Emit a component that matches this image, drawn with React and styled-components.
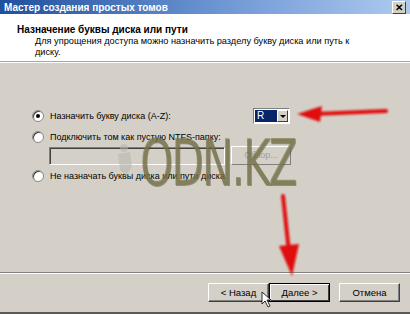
import React from "react";
import styled, { createGlobalStyle } from "styled-components";

const Global = createGlobalStyle`
  html, body { margin: 0; padding: 0; background: #d4d0c8; }
  body { font-family: "Liberation Sans", Arial, sans-serif; }
`;

const Window = styled.div`
  position: relative;
  width: 410px;
  height: 314px;
  display: flex;
  flex-direction: column;
  background: #d4d0c8;
  overflow: hidden;
  border-bottom: 2px solid #5a5955;
  box-sizing: border-box;
`;

const TitleBar = styled.div`
  height: 14px;
  flex: none;
  display: flex;
  align-items: center;
  justify-content: space-between;
  padding: 0 4px 0 4px;
  background: linear-gradient(90deg, #1f4f9e 0%, #6f98d4 55%, #aecbef 100%);
  color: #fff;
  font-size: 10px;
  font-weight: bold;
`;

const CloseBox = styled.div`
  width: 12px;
  height: 11px;
  background: #d4d0c8;
  border: 1px solid;
  border-color: #fff #404040 #404040 #fff;
  color: #000;
  font-size: 10px;
  line-height: 11px;
  text-align: center;
  font-weight: bold;
  margin-top: 1px;
`;

const Header = styled.div`
  height: 48px;
  flex: none;
  background: #fff;
  padding: 9px 0 0 17px;
  box-sizing: border-box;
  border-bottom: 1px solid #a9a6a0;
`;

const HeaderTitle = styled.div`
  font-size: 10px;
  font-weight: bold;
  color: #000;
  line-height: 13px;
`;

const HeaderText = styled.div`
  margin: 0 0 0 18px;
  font-size: 9.2px;
  color: #000;
  line-height: 11px;
  width: 330px;
`;

const Body = styled.div`
  flex: 1;
  border-top: 1px solid #fff;
  padding: 46px 0 0 32px;
  display: flex;
  flex-direction: column;
  font-size: 9px;
  color: #000;
`;

const OptionRow = styled.div`
  display: flex;
  align-items: center;
  height: 14px;
  margin-top: ${(p) => p.$gap || 0}px;
`;

const Radio = styled.span`
  width: 10px;
  height: 10px;
  border-radius: 50%;
  background: #fff;
  border: 1px solid #8a8883;
  box-shadow: inset 1px 1px 0 #404040;
  margin-right: 6px;
  display: flex;
  align-items: center;
  justify-content: center;
  &::after {
    content: "";
    width: 4px;
    height: 4px;
    border-radius: 50%;
    background: ${(p) => (p.$checked ? "#000" : "transparent")};
  }
`;

const Label = styled.span`
  width: 203px;
`;

const Combo = styled.div`
  display: flex;
  width: 37px;
  height: 16px;
  border: 1px solid;
  border-color: #808080 #fff #fff #808080;
  background: #fff;
  box-sizing: border-box;
  padding: 1px;
`;

const ComboValue = styled.div`
  flex: 1;
  background: #0a246a;
  color: #fff;
  font-size: 10px;
  line-height: 12px;
  padding-left: 2px;
`;

const ComboArrow = styled.div`
  width: 11px;
  background: #d4d0c8;
  border: 1px solid;
  border-color: #fff #404040 #404040 #fff;
  box-sizing: border-box;
  display: flex;
  align-items: center;
  justify-content: center;
  &::after {
    content: "";
    border-left: 3px solid transparent;
    border-right: 3px solid transparent;
    border-top: 3px solid #000;
  }
`;

const PathRow = styled.div`
  display: flex;
  align-items: center;
  margin: 2px 0 0 17px;
  gap: 6px;
`;

const PathInput = styled.div`
  width: 176px;
  height: 18px;
  border: 1px solid;
  border-color: #808080 #fff #fff #808080;
  box-shadow: inset 1px 1px 0 #404040;
  background: #d4d0c8;
  box-sizing: border-box;
`;

const BrowseButton = styled.div`
  width: 60px;
  height: 19px;
  border: 1px solid;
  border-color: #fff #808080 #808080 #fff;
  box-sizing: border-box;
  color: #a09e98;
  font-size: 9px;
  line-height: 17px;
  text-align: center;
`;

const Footer = styled.div`
  height: 40px;
  flex: none;
  border-top: 1px solid #808080;
  box-shadow: inset 0 1px 0 #fff;
  display: flex;
  justify-content: flex-end;
  align-items: flex-start;
  padding: 10px 10px 0 0;
  box-sizing: border-box;
`;

const Button = styled.div`
  width: 61px;
  height: 19px;
  margin-left: ${(p) => p.$gap || 0}px;
  box-sizing: border-box;
  border: 1px solid;
  border-color: ${(p) => (p.$focus ? "#000" : "#fff #404040 #404040 #fff")};
  box-shadow: ${(p) => (p.$focus ? "inset 1px 1px 0 #fff, inset -1px -1px 0 #404040" : "inset -1px -1px 0 #808080")};
  font-size: 9.5px;
  line-height: 17px;
  text-align: center;
  color: #000;
`;

const Watermark = styled.div`
  position: absolute;
  left: 140px;
  top: 126px;
  font-size: 64px;
  font-family: "DejaVu Sans", sans-serif;
  letter-spacing: -3px;
  color: rgba(126, 122, 78, 0.7);
  transform: scaleX(0.66);
  transform-origin: left top;
  text-shadow: 1px 1px 0 rgba(60, 58, 30, 0.45);
  pointer-events: none;
`;

const Overlay = styled.svg`
  position: absolute;
  left: 0;
  top: 0;
  pointer-events: none;
`;

export default function App() {
  return (
    <>
      <Global />
      <Window>
        <TitleBar>
          <span>Мастер создания простых томов</span>
          <CloseBox>✕</CloseBox>
        </TitleBar>
        <Header>
          <HeaderTitle>Назначение буквы диска или пути</HeaderTitle>
          <HeaderText>
            Для упрощения доступа можно назначить разделу букву диска или путь к диску.
          </HeaderText>
        </Header>
        <Body>
          <OptionRow>
            <Radio $checked />
            <Label>Назначить букву диска (A-Z):</Label>
            <Combo>
              <ComboValue>R</ComboValue>
              <ComboArrow />
            </Combo>
          </OptionRow>
          <OptionRow $gap={7}>
            <Radio />
            <span>Подключить том как пустую NTFS-папку:</span>
          </OptionRow>
          <PathRow>
            <PathInput />
            <BrowseButton>Обзор...</BrowseButton>
          </PathRow>
          <OptionRow $gap={4}>
            <Radio />
            <span>Не назначать буквы диска или пути диска</span>
          </OptionRow>
        </Body>
        <Footer>
          <Button>&lt; Назад</Button>
          <Button $focus>Далее &gt;</Button>
          <Button $gap={9}>Отмена</Button>
        </Footer>
        <Watermark>ODN.KZ</Watermark>
        <Overlay width="410" height="314" viewBox="0 0 410 314">
          <defs>
            <filter id="blur" x="-20%" y="-20%" width="140%" height="140%">
              <feGaussianBlur stdDeviation="0.8" />
            </filter>
          </defs>
          <g fill="#e01010" stroke="#e01010" filter="url(#blur)">
            <line x1="386" y1="111" x2="315" y2="114" strokeWidth="4" strokeLinecap="round" />
            <polygon points="297,114 322,106 320,122" stroke="none" />
            <line x1="283" y1="196" x2="289" y2="252" strokeWidth="4" strokeLinecap="round" />
            <polygon points="279,246 299,244 292,276" stroke="none" />
          </g>
          <g opacity="0.55" fill="#b8b6ae">
            <circle cx="124" cy="148" r="4" />
            <path d="M118 154 L130 152 L132 166 L126 176 L120 170 Z" />
          </g>
          <path d="M262 292 L262 304 L265 301 L268 307 L270 306 L267 300 L271 300 Z" fill="#fff" stroke="#000" strokeWidth="0.8" />
        </Overlay>
      </Window>
    </>
  );
}
